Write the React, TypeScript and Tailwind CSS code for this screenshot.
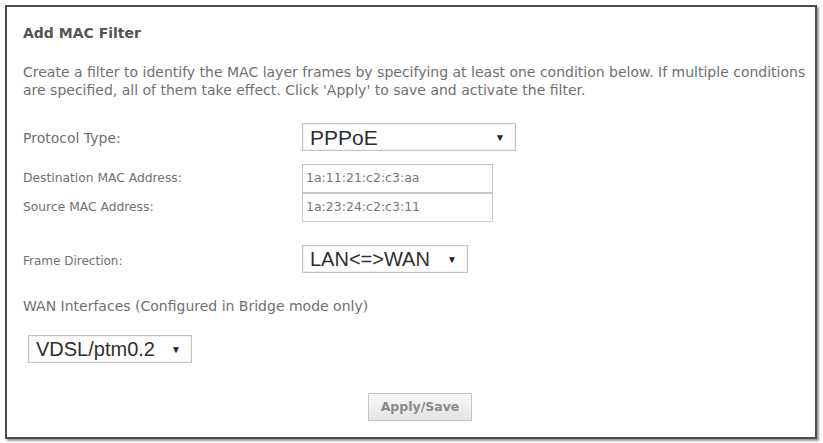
import React from "react";

const bodyFont = { fontFamily: '"DejaVu Sans", Verdana, sans-serif' };

function FakeSelect({ value, width, size }: { value: string; width: string; size: string }) {
  return (
    <div
      className={`flex h-[28px] items-center justify-between border border-[#c4c4c4] bg-white pl-[7px] pr-[10px] text-[#2e2e2e] shadow-[inset_0_0_0_1px_#f2f2f2] ${width} ${size}`}
      style={{ fontFamily: '"Liberation Sans", Arial, sans-serif' }}
    >
      <span className="leading-none">{value}</span>
      <span className="text-[10px] text-[#222]">▼</span>
    </div>
  );
}

function TextBox({ value }: { value: string }) {
  return (
    <div className="flex h-[29px] w-[191px] items-center border border-[#c8c8c8] bg-white pl-[3px] text-[12.5px] text-[#777]">
      {value}
    </div>
  );
}

export default function App() {
  return (
    <div className="h-[443px] w-[823px] bg-white pl-[5px] pt-[5px]" style={bodyFont}>
      <div className="h-[434px] w-[812px] border-2 border-[#4d4d4d] bg-white pl-[16px] shadow-[2px_2px_2px_#9a9a9a]">
        <h1 className="mt-[17px] text-[14px] font-bold leading-[18px] text-[#555]">Add MAC Filter</h1>

        <p className="mt-[21px] whitespace-nowrap text-[14px] leading-[18px] text-[#707070]">
          Create a filter to identify the MAC layer frames by specifying at least one condition below. If multiple conditions
          <br />
          are specified, all of them take effect. Click 'Apply' to save and activate the filter.
        </p>

        <div className="mt-[24px] flex items-center">
          <div className="mt-[2px] w-[279px] text-[14px] text-[#707070]">Protocol Type:</div>
          <FakeSelect value="PPPoE" width="w-[214px]" size="text-[21px]" />
        </div>

        <div className="mt-[13px] flex items-center">
          <div className="w-[279px] text-[12.3px] text-[#707070]">Destination MAC Address:</div>
          <TextBox value="1a:11:21:c2:c3:aa" />
        </div>
        <div className="flex items-center">
          <div className="w-[279px] text-[12.3px] text-[#707070]">Source MAC Address:</div>
          <TextBox value="1a:23:24:c2:c3:11" />
        </div>

        <div className="mt-[23px] flex items-center">
          <div className="mt-[4px] w-[279px] text-[12px] text-[#707070]">Frame Direction:</div>
          <FakeSelect value="LAN<=>WAN" width="w-[166px]" size="text-[20px]" />
        </div>

        <div className="mt-[24px] text-[14px] leading-[18px] text-[#707070]">WAN Interfaces (Configured in Bridge mode only)</div>

        <div className="ml-[5px] mt-[20px]">
          <FakeSelect value="VDSL/ptm0.2" width="w-[164px]" size="text-[20px]" />
        </div>

        <div className="mt-[30px] flex">
          <button className="ml-[345px] h-[28px] w-[104px] border border-[#c6c6c6] bg-gradient-to-b from-[#f8f8f8] to-[#e4e4e4] text-[12.5px] font-bold text-[#8a8a8a]">
            Apply/Save
          </button>
        </div>
      </div>
    </div>
  );
}
